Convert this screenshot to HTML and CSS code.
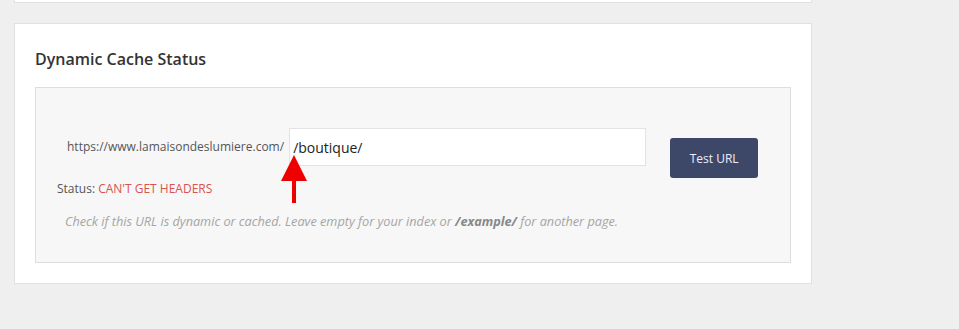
FILE: index.html
```html
<!DOCTYPE html>
<html lang="en">
<head>
    <meta charset="UTF-8">
    <meta name="viewport" content="width=device-width, initial-scale=1.0">
    <title>Dynamic Cache Status</title>
    <link rel="stylesheet" href="styles.css">
</head>
<body>
  <div class="card card-prev"></div>
  <div class="card">
    <h3>Dynamic Cache Status</h3>
    <div class="test-box">
        <div class="test-row">
            <label for="url" class="base-url">https://www.lamaisondeslumiere.com/</label>
            <div class="input-wrap">
                <input type="text" id="url" value="/boutique/">
                <svg class="arrow" width="28" height="52" viewBox="0 0 28 52">
                    <polygon points="13,0 26,26 0,26" fill="#ee0000"/>
                    <rect x="11" y="25" width="4" height="23" fill="#ee0000"/>
                </svg>
            </div>
            <button type="button">Test URL</button>
        </div>
        <p class="status">Status: <span class="fail">CAN'T GET HEADERS</span></p>
        <p class="help">Check if this URL is dynamic or cached. Leave empty for your index or <b>/example/</b> for another page.</p>
    </div>
  </div>
</body>
</html>
```

FILE: styles.css
```css
body {
    font-family: "Open Sans", Arial, sans-serif;
    margin: 0;
    padding: 0;
    background-color: #efefef;
    color: #333;
}
.card {
    background-color: white;
    border: 1px solid #e1e1e1;
    margin-left: 14px;
    padding: 0 20px 20px 20px;
    box-sizing: border-box;
    width: 798px;
}
.card-prev {
    height: 3px;
    border-top: none;
    padding: 0;
    margin-bottom: 20px;
}
h3 {
    margin: 0;
    padding-top: 24px;
    font-size: 16px;
    font-weight: 600;
    line-height: 22px;
    color: #333;
}
.test-box {
    margin-top: 17px;
    background-color: #f7f7f7;
    border: 1px solid #dedede;
    height: 176px;
    box-sizing: border-box;
    padding: 40px 20px 0 21px;
}
.test-row {
    display: flex;
    align-items: flex-start;
    padding-left: 10px;
}
.base-url {
    font-size: 12px;
    color: #555;
    line-height: 38px;
    margin-right: 5px;
}
.input-wrap {
    position: relative;
}
input {
    width: 357px;
    height: 38px;
    box-sizing: border-box;
    border: 1px solid #e3e3e3;
    background-color: white;
    font-family: "Open Sans", Arial, sans-serif;
    font-size: 14px;
    color: #222;
    padding: 0 3px;
    outline: none;
}
.arrow {
    position: absolute;
    left: -8px;
    top: 27px;
}
button {
    margin-left: 24px;
    margin-top: 10px;
    width: 88px;
    height: 40px;
    background-color: #3d4768;
    color: #eef;
    border: none;
    border-radius: 3px;
    font-family: "Open Sans", Arial, sans-serif;
    font-size: 12px;
}
.status {
    margin: 2px 0 0 0;
    font-size: 12px;
    color: #555;
}
.fail {
    color: #d9534f;
}
.help {
    margin: 15px 0 0 8px;
    font-size: 12.7px;
    font-style: italic;
    color: #a5a5a5;
}
.help b {
    color: #888;
}
```
